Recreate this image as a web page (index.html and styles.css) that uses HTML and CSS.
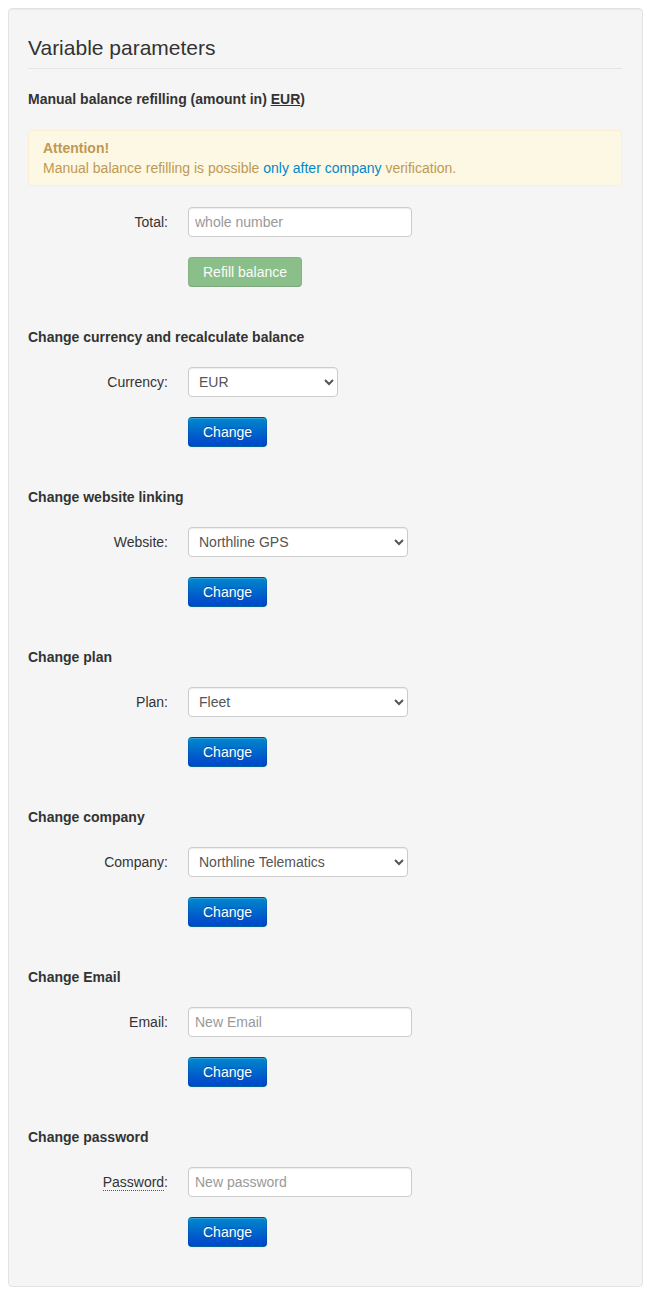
FILE: index.html
```html
<!DOCTYPE html>
<html lang="en">
<head>
  <meta charset="UTF-8">
  <meta name="viewport" content="width=device-width, initial-scale=1.0">
  <title>Variable parameters</title>
  <link rel="stylesheet" href="styles.css">
</head>
<body>
  <div class="well">
    <div class="legend">Variable parameters</div>

    <!-- Пополнение баланса -->
    <div class="section">
      <p class="section-title section-title-alert">Manual balance refilling (amount in) <u>EUR</u>)</p>
      <div class="alert">
        <strong>Attention!</strong><br>
        Manual balance refilling is possible <a href="#">only after company</a> verification.
      </div>
      <div class="control-group">
        <label class="control-label">Total:</label>
        <input type="text" class="input" placeholder="whole number">
      </div>
      <div class="form-actions">
        <button class="btn btn-success" disabled>Refill balance</button>
      </div>
    </div>

    <!-- Валюта -->
    <div class="section">
      <p class="section-title">Change currency and recalculate balance</p>
      <div class="control-group">
        <label class="control-label">Currency:</label>
        <select class="select select-small">
          <option>EUR</option>
          <option>USD</option>
          <option>RUB</option>
        </select>
      </div>
      <div class="form-actions">
        <button class="btn btn-primary">Change</button>
      </div>
    </div>

    <!-- Сайт -->
    <div class="section">
      <p class="section-title">Change website linking</p>
      <div class="control-group">
        <label class="control-label">Website:</label>
        <select class="select">
          <option>Northline GPS</option>
        </select>
      </div>
      <div class="form-actions">
        <button class="btn btn-primary">Change</button>
      </div>
    </div>

    <!-- Тариф -->
    <div class="section">
      <p class="section-title">Change plan</p>
      <div class="control-group">
        <label class="control-label">Plan:</label>
        <select class="select">
          <option>Fleet</option>
        </select>
      </div>
      <div class="form-actions">
        <button class="btn btn-primary">Change</button>
      </div>
    </div>

    <!-- Компания -->
    <div class="section">
      <p class="section-title">Change company</p>
      <div class="control-group">
        <label class="control-label">Company:</label>
        <select class="select">
          <option>Northline Telematics</option>
        </select>
      </div>
      <div class="form-actions">
        <button class="btn btn-primary">Change</button>
      </div>
    </div>

    <!-- Email -->
    <div class="section">
      <p class="section-title">Change Email</p>
      <div class="control-group">
        <label class="control-label">Email:</label>
        <input type="text" class="input" placeholder="New Email">
      </div>
      <div class="form-actions">
        <button class="btn btn-primary">Change</button>
      </div>
    </div>

    <!-- Пароль -->
    <div class="section">
      <p class="section-title">Change password</p>
      <div class="control-group">
        <label class="control-label"><abbr title="Password">Password</abbr>:</label>
        <input type="password" class="input" placeholder="New password">
      </div>
      <div class="form-actions">
        <button class="btn btn-primary">Change</button>
      </div>
    </div>
  </div>
</body>
</html>
```

FILE: styles.css
```css
/* Базовые настройки */
body {
  margin: 8px;
  font-family: "Liberation Sans", Arial, sans-serif;
  font-size: 14px;
  line-height: 20px;
  color: #333;
  background: #fff;
}

/* Панель */
.well {
  background: #f5f5f5;
  border: 1px solid #e3e3e3;
  border-radius: 4px;
  box-shadow: inset 0 1px 1px rgba(0, 0, 0, 0.05);
  padding: 19px 20px 39px 19px;
}

.legend {
  font-size: 21px;
  line-height: 40px;
  border-bottom: 1px solid #e5e5e5;
  margin-bottom: 20px;
}

.section {
  margin-bottom: 40px;
}
.section:last-child {
  margin-bottom: 0;
}

.section-title {
  margin: 0 0 20px;
  font-weight: bold;
}
.section-title-alert {
  margin-bottom: 21px;
}

/* Предупреждение */
.alert {
  background: #fcf8e3;
  border: 1px solid #fbeed5;
  border-radius: 4px;
  color: #c09853;
  padding: 7px 14px;
  margin-bottom: 21px;
}
.alert a {
  color: #0088cc;
  text-decoration: none;
}

/* Строки формы */
.control-group {
  display: flex;
  align-items: center;
  margin-bottom: 20px;
}

.control-label {
  width: 140px;
  padding-right: 20px;
  text-align: right;
}

abbr[title] {
  text-decoration: none;
  border-bottom: 1px dotted #555;
  cursor: help;
}

.input,
.select {
  box-sizing: border-box;
  height: 30px;
  margin: 0;
  font-family: inherit;
  font-size: 14px;
  color: #555;
  background-color: #fff;
  border: 1px solid #ccc;
  border-radius: 4px;
  box-shadow: inset 0 1px 1px rgba(0, 0, 0, 0.075);
}

.input {
  width: 224px;
  padding: 4px 6px;
}
.input::placeholder {
  color: #999;
}

.select {
  width: 220px;
  padding: 4px 6px;
}
.select-small {
  width: 150px;
}

/* Кнопки */
.form-actions {
  padding-left: 160px;
}

.btn {
  display: inline-block;
  box-sizing: border-box;
  height: 30px;
  padding: 4px 14px;
  font-family: inherit;
  font-size: 14px;
  line-height: 20px;
  color: #fff;
  border: 1px solid;
  border-color: rgba(0, 0, 0, 0.1) rgba(0, 0, 0, 0.1) rgba(0, 0, 0, 0.25);
  border-radius: 4px;
  cursor: pointer;
}

.btn-primary {
  background-color: #006dcc;
  background-image: linear-gradient(to bottom, #0088cc, #0044cc);
  text-shadow: 0 -1px 0 rgba(0, 0, 0, 0.25);
  box-shadow: inset 0 1px 0 rgba(255, 255, 255, 0.2), 0 1px 2px rgba(0, 0, 0, 0.05);
}

.btn-success {
  background-color: #51a351;
}
.btn[disabled] {
  opacity: 0.65;
  cursor: default;
}
```
